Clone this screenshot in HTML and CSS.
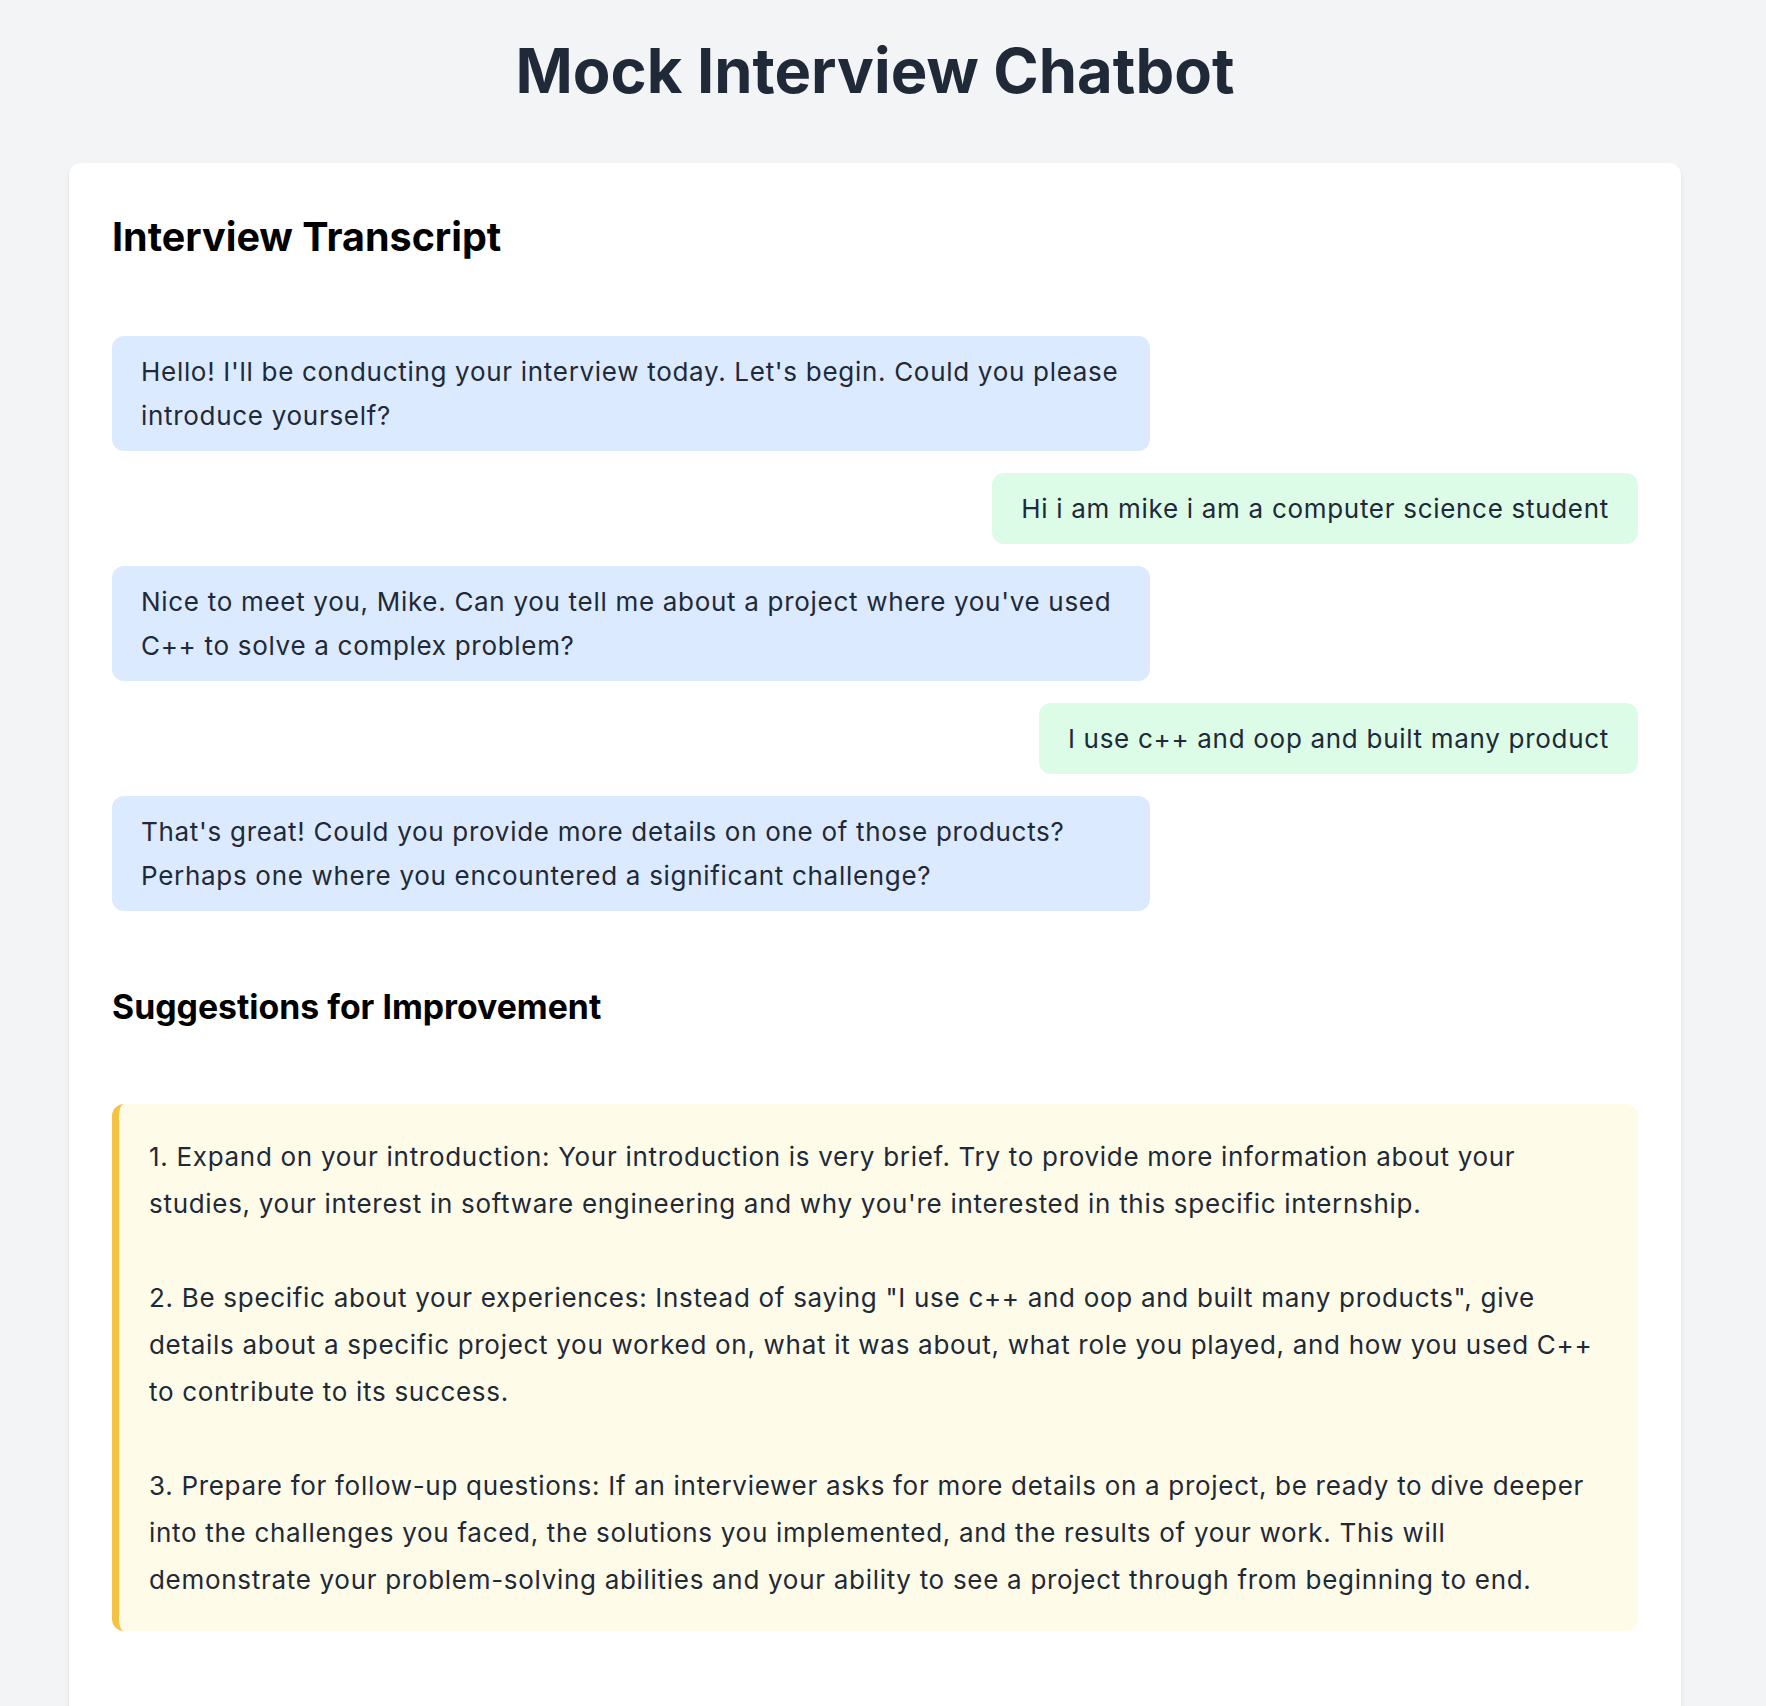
FILE: index.html
```html
<!DOCTYPE html>
<html lang="en">
<head>
<meta charset="utf-8">
<title>Mock Interview Chatbot</title>
<link rel="stylesheet" href="styles.css">
</head>
<body>
<div class="page">
  <h1 class="title">Mock Interview Chatbot</h1>
  <main class="card">
    <h2 class="section-title">Interview Transcript</h2>
    <div class="chat">
      <div class="msg msg-ai">Hello! I'll be conducting your interview today. Let's begin. Could you please introduce yourself?</div>
      <div class="msg msg-user">Hi i am mike i am a computer science student</div>
      <div class="msg msg-ai">Nice to meet you, Mike. Can you tell me about a project where you've used C++ to solve a complex problem?</div>
      <div class="msg msg-user">I use c++ and oop and built many product</div>
      <div class="msg msg-ai">That's great! Could you provide more details on one of those products? Perhaps one where you encountered a significant challenge?</div>
    </div>
    <h3 class="sub-title">Suggestions for Improvement</h3>
    <div class="suggestions">
      <p>1. Expand on your introduction: Your introduction is very brief. Try to provide more information about your studies, your interest in software engineering and why you're interested in this specific internship.</p>
      <p>2. Be specific about your experiences: Instead of saying "I use c++ and oop and built many products", give details about a specific project you worked on, what it was about, what role you played, and how you used C++ to contribute to its success.</p>
      <p>3. Prepare for follow-up questions: If an interviewer asks for more details on a project, be ready to dive deeper into the challenges you faced, the solutions you implemented, and the results of your work. This will demonstrate your problem-solving abilities and your ability to see a project through from beginning to end.</p>
    </div>
  </main>
</div>
</body>
</html>
```

FILE: styles.css
```css
* { box-sizing: border-box; }

html, body {
  margin: 0;
  padding: 0;
  background: #f3f4f6;
}

body {
  font-family: "Inter", "Liberation Sans", sans-serif;
  color: #1f2937;
}

.page {
  padding: 34px 16px 80px 0;
}

.title {
  margin: 0 0 55px;
  font-size: 61.5px;
  line-height: 74px;
  font-weight: 700;
  text-align: center;
  color: #1f2937;
}

.card {
  width: 1612px;
  margin: 0 auto;
  background: #ffffff;
  border-radius: 12px;
  box-shadow: 0 4px 6px -1px rgba(0,0,0,0.1), 0 2px 4px -2px rgba(0,0,0,0.1);
  padding: 50px 43px 120px;
}

.section-title {
  margin: 0 0 75px;
  font-size: 39.5px;
  line-height: 48px;
  font-weight: 700;
  color: #000;
}

.chat {
  display: flex;
  flex-direction: column;
  align-items: flex-start;
  gap: 22px;
}

.msg {
  padding: 13.5px 29px;
  border-radius: 12px;
  font-size: 26px;
  line-height: 44px;
  letter-spacing: 0.7px;
  color: #1f2937;
}

.msg-ai {
  width: 68%;
  background: #dbeafe;
}

.msg-user {
  align-self: flex-end;
  background: #dcfce7;
}

.sub-title {
  margin: 75px 0 77px;
  font-size: 33.8px;
  line-height: 41px;
  font-weight: 700;
  color: #000;
}

.suggestions {
  background: #fefce8;
  border-left: 7px solid #f6c244;
  border-radius: 12px;
  padding: 29px 30px 28px;
  font-size: 26px;
  line-height: 47px;
  letter-spacing: 0.7px;
  color: #1f2937;
}

.suggestions p {
  margin: 0 0 47px;
}

.suggestions p:last-child {
  margin-bottom: 0;
}
```
